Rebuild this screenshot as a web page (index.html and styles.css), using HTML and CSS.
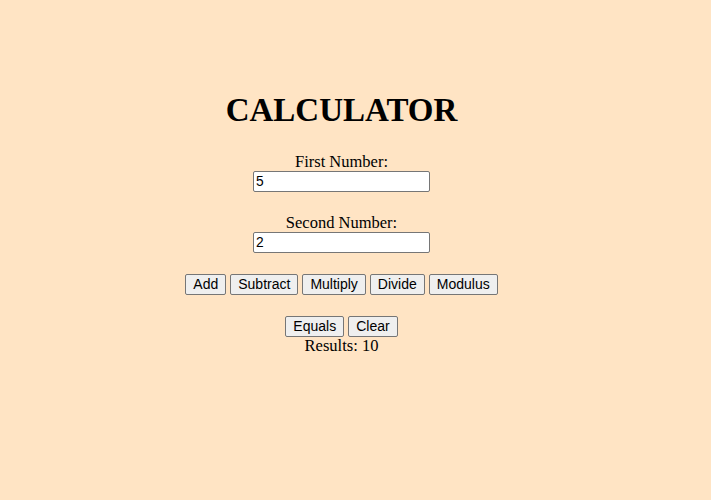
FILE: index.html
```html
<!DOCTYPE html>
<html>
<head>
<meta charset="utf-8">
<title>Calculator</title>
<link rel="stylesheet" href="styles.css">
</head>
<body>
<div class="calc">
  <h1 class="title">CALCULATOR</h1>
  <label class="label" for="n1">First Number:</label>
  <input class="field" id="n1" type="text" value="5">
  <label class="label label-gap" for="n2">Second Number:</label>
  <input class="field" id="n2" type="text" value="2">
  <div class="row row-gap">
    <button class="btn">Add</button>
    <button class="btn">Subtract</button>
    <button class="btn">Multiply</button>
    <button class="btn">Divide</button>
    <button class="btn">Modulus</button>
  </div>
  <div class="row row-gap">
    <button class="btn">Equals</button>
    <button class="btn">Clear</button>
  </div>
  <div class="result">Results: 10</div>
</div>
</body>
</html>
```
FILE: styles.css
```css
html, body {
  margin: 0;
  padding: 0;
  background: #ffe4c4;
}
body {
  font-family: "Liberation Serif", "Times New Roman", serif;
  font-size: 16.5px;
  color: #000;
}
.calc {
  width: 683px;
  display: flex;
  flex-direction: column;
  align-items: center;
  padding-top: 91px;
}
.title {
  font-size: 33px;
  font-weight: bold;
  margin: 0 0 23px 0;
  line-height: 38px;
}
.label {
  display: block;
  line-height: 19px;
  height: 19px;
}
.label-gap {
  margin-top: 21px;
}
.field {
  box-sizing: border-box;
  width: 177px;
  height: 21px;
  margin: 0;
  padding: 1px 2px;
  border: 1px solid #767676;
  border-radius: 2px;
  background: #fff;
  font-family: "Liberation Sans", Arial, sans-serif;
  font-size: 13.8px;
  color: #000;
}
.row {
  display: flex;
  gap: 4px;
}
.row-gap {
  margin-top: 21px;
}
.btn {
  box-sizing: border-box;
  height: 21px;
  margin: 0;
  padding: 0 7px;
  border: 1px solid #767676;
  border-radius: 2px;
  background: #efefef;
  font-family: "Liberation Sans", Arial, sans-serif;
  font-size: 14px;
  color: #000;
  line-height: 19px;
}
.result {
  line-height: 18px;
}
```
